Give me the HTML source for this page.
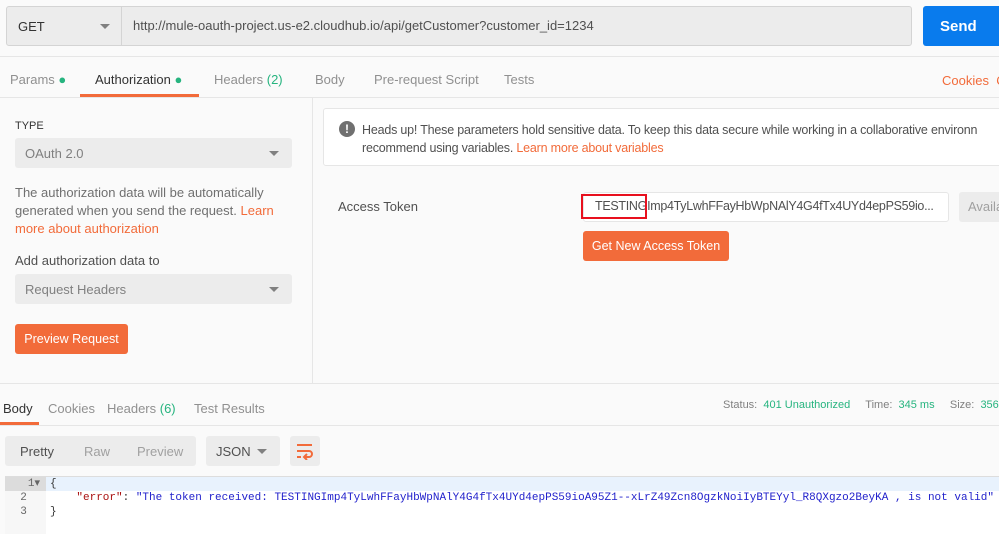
<!DOCTYPE html><html><head><style>
*{box-sizing:border-box;margin:0;padding:0}
body{width:999px;height:534px;overflow:hidden;background:#fafafa;font-family:"Liberation Sans",sans-serif;font-size:13px;color:#505050;position:relative}
.a{position:absolute;white-space:nowrap}
.dd{background:#ececec;border-radius:3px}
.tri{position:absolute;width:0;height:0;border-left:5px solid transparent;border-right:5px solid transparent;border-top:5px solid #808080}
.or{color:#f26b3a}
.gr{color:#26b47f}
.btn{background:#f26b3a;color:#fff;border-radius:3px;text-align:center}
</style></head><body>
<div class="a dd" style="left:6px;top:6px;width:906px;height:40px;border:1px solid #d4d4d4;border-radius:3px"></div>
<div class="a" style="left:121px;top:7px;width:1px;height:38px;background:#d4d4d4"></div>
<div class="a" style="left:18px;top:19px;font-size:13px;color:#333">GET</div>
<div class="tri" style="left:100px;top:24px"></div>
<div class="a" style="left:133px;top:18px;color:#505050">http://mule-oauth-project.us-e2.cloudhub.io/api/getCustomer?customer_id=1234</div>
<div class="a" style="left:923px;top:6px;width:80px;height:40px;background:#097bed;border-radius:3px;color:#fff;font-weight:bold;font-size:15px;padding:12px 0 0 17px">Send</div>
<div class="a" style="left:0;top:56px;width:999px;height:1px;background:#e6e6e6"></div>
<div class="a" style="left:10px;top:72px;color:#909090">Params <span class="gr">●</span></div>
<div class="a" style="left:95px;top:72px;color:#333">Authorization <span class="gr">●</span></div>
<div class="a" style="left:80px;top:94px;width:119px;height:3px;background:#f26b3a"></div>
<div class="a" style="left:214px;top:72px;color:#909090">Headers <span class="gr">(2)</span></div>
<div class="a" style="left:315px;top:72px;color:#909090">Body</div>
<div class="a" style="left:374px;top:72px;color:#909090">Pre-request Script</div>
<div class="a" style="left:504px;top:72px;color:#909090">Tests</div>
<div class="a or" style="left:942px;top:73px">Cookies&nbsp;&nbsp;C</div>
<div class="a" style="left:0;top:97px;width:999px;height:1px;background:#e6e6e6"></div>
<div class="a" style="left:312px;top:98px;width:1px;height:285px;background:#e6e6e6"></div>
<div class="a" style="left:15px;top:120px;font-size:11px;color:#333">TYPE</div>
<div class="a dd" style="left:15px;top:138px;width:277px;height:30px"></div>
<div class="a" style="left:25px;top:146px;color:#808080">OAuth 2.0</div>
<div class="tri" style="left:269px;top:151px"></div>
<div class="a" style="left:15px;top:184px;line-height:18px;white-space:normal;width:270px;color:#707070">The authorization data will be automatically generated when you send the request. <span class="or">Learn more about authorization</span></div>
<div class="a" style="left:15px;top:253px;color:#505050">Add authorization data to</div>
<div class="a dd" style="left:15px;top:274px;width:277px;height:30px"></div>
<div class="a" style="left:25px;top:282px;color:#808080">Request Headers</div>
<div class="tri" style="left:269px;top:287px"></div>
<div class="a btn" style="left:15px;top:324px;width:113px;height:30px;padding-top:8px;font-size:12.5px">Preview Request</div>
<div class="a" style="left:323px;top:108px;width:690px;height:58px;background:#fff;border:1px solid #e6e6e6;border-radius:3px"></div>
<div class="a" style="left:339px;top:121px;width:16px;height:16px;border-radius:50%;background:#707070;color:#fff;font-weight:bold;font-size:12px;text-align:center;line-height:16px">!</div>
<div class="a" style="left:362px;top:121px;color:#505050;line-height:18px;font-size:12.5px;letter-spacing:-0.2px">Heads up! These parameters hold sensitive data. To keep this data secure while working in a collaborative environn<br>recommend using variables. <span class="or">Learn more about variables</span></div>
<div class="a" style="left:338px;top:199px;color:#505050">Access Token</div>
<div class="a" style="left:583px;top:192px;width:366px;height:30px;background:#fff;border:1px solid #e6e6e6;border-radius:3px"></div>
<div class="a" style="left:595px;top:199px;color:#505050;font-size:12.5px;letter-spacing:-0.3px">TESTINGImp4TyLwhFFayHbWpNAlY4G4fTx4UYd4epPS59io...</div>
<div class="a" style="left:581px;top:194px;width:66px;height:25px;border:2px solid #e8101e"></div>
<div class="a dd" style="left:959px;top:192px;width:50px;height:30px;color:#a0a0a0;padding:7px 0 0 9px">Availa</div>
<div class="a btn" style="left:583px;top:231px;width:146px;height:30px;padding-top:8px;font-size:12.5px">Get New Access Token</div>
<div class="a" style="left:0;top:383px;width:999px;height:1px;background:#e6e6e6"></div>
<div class="a" style="left:3px;top:401px;color:#333">Body</div>
<div class="a" style="left:0;top:422px;width:39px;height:3px;background:#f26b3a"></div>
<div class="a" style="left:48px;top:401px;color:#909090">Cookies</div>
<div class="a" style="left:107px;top:401px;color:#909090">Headers <span class="gr">(6)</span></div>
<div class="a" style="left:194px;top:401px;color:#909090">Test Results</div>
<div class="a" style="left:723px;top:399px;font-size:11px;color:#808080">Status:&nbsp; <span class="gr">401 Unauthorized</span>&nbsp;&nbsp;&nbsp;&nbsp; Time:&nbsp; <span class="gr">345 ms</span>&nbsp;&nbsp;&nbsp;&nbsp; Size:&nbsp; <span class="gr">356 B</span></div>
<div class="a" style="left:0;top:425px;width:999px;height:1px;background:#e6e6e6"></div>
<div class="a dd" style="left:5px;top:436px;width:191px;height:30px"></div>
<div class="a" style="left:20px;top:444px;color:#505050">Pretty</div>
<div class="a" style="left:84px;top:444px;color:#a0a0a0">Raw</div>
<div class="a" style="left:137px;top:444px;color:#a0a0a0">Preview</div>
<div class="a dd" style="left:206px;top:436px;width:74px;height:30px"></div>
<div class="a" style="left:216px;top:444px;color:#505050">JSON</div>
<div class="tri" style="left:257px;top:449px"></div>
<div class="a dd" style="left:290px;top:436px;width:30px;height:30px"></div>
<svg class="a" style="left:296px;top:442px" width="18" height="18" viewBox="0 0 18 18" fill="none" stroke="#f26b3a" stroke-width="2"><path d="M1 3h15M1 9h12a3 3 0 0 1 0 6H9M1 15h4M11 12l-3 3 3 3"/></svg>
<div class="a" style="left:5px;top:476px;width:994px;height:58px;background:#fff;border-top:1px solid #ddd"></div>
<div class="a" style="left:5px;top:477px;width:41px;height:57px;background:#f7f7f7"></div>
<div class="a" style="left:5px;top:477px;width:41px;height:14px;background:#dcdcdc"></div>
<div class="a" style="left:46px;top:477px;width:953px;height:14px;background:#e8f2fd"></div>
<div class="a" style="left:0;top:477px;font-family:'Liberation Mono',monospace;font-size:11px;line-height:14px;color:#666;width:40px;text-align:right">1▾<br>2&nbsp;&nbsp;<br>3&nbsp;&nbsp;</div>
<div class="a" style="left:50px;top:477px;font-family:'Liberation Mono',monospace;font-size:11px;line-height:14px;color:#333">{<br>&nbsp;&nbsp;&nbsp;&nbsp;<span style="color:#a11">"error"</span>: <span style="color:#22c">"The token received: TESTINGImp4TyLwhFFayHbWpNAlY4G4fTx4UYd4epPS59ioA95Z1--xLrZ49Zcn8OgzkNoiIyBTEYyl_R8QXgzo2BeyKA , is not valid"</span><br>}</div>
</body></html>
